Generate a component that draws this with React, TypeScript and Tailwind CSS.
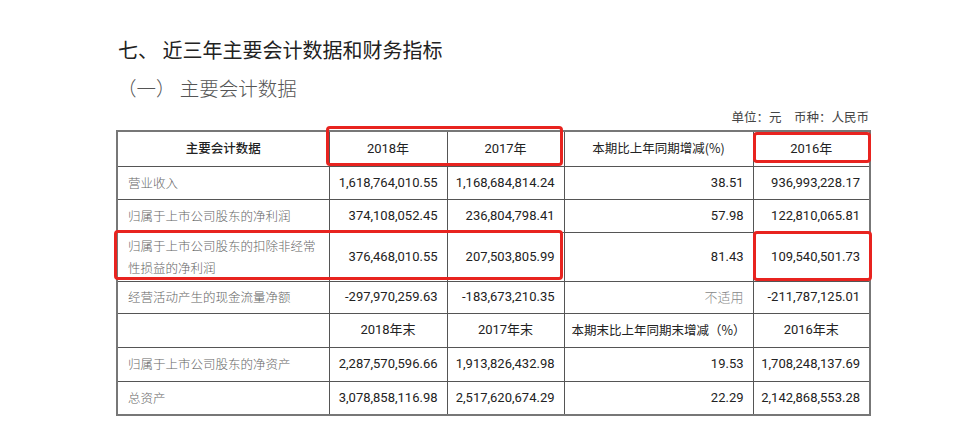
import React from "react";

const cjk = "font-['Noto_Sans_CJK_SC',sans-serif]";
const num = "font-['Roboto','Noto_Sans_CJK_SC',sans-serif]";

type Row = {
  label: string[];
  v: [string, string, string, string];
  h: string;
  gray4?: boolean;
};

const rows1: Row[] = [
  { label: ["营业收入"], v: ["1,618,764,010.55", "1,168,684,814.24", "38.51", "936,993,228.17"], h: "h-[33px]" },
  { label: ["归属于上市公司股东的净利润"], v: ["374,108,052.45", "236,804,798.41", "57.98", "122,810,065.81"], h: "h-[33px]" },
  {
    label: ["归属于上市公司股东的扣除非经常", "性损益的净利润"],
    v: ["376,468,010.55", "207,503,805.99", "81.43", "109,540,501.73"],
    h: "h-[49px]",
  },
  { label: ["经营活动产生的现金流量净额"], v: ["-297,970,259.63", "-183,673,210.35", "不适用", "-211,787,125.01"], h: "h-[32px]", gray4: true },
];

const rows2: Row[] = [
  { label: ["归属于上市公司股东的净资产"], v: ["2,287,570,596.66", "1,913,826,432.98", "19.53", "1,708,248,137.69"], h: "h-[34px]" },
  { label: ["总资产"], v: ["3,078,858,116.98", "2,517,620,674.29", "22.29", "2,142,868,553.28"], h: "h-[34px]" },
];

const td = "border border-[#555] p-0";

function DataRow({ r }: { r: Row }) {
  return (
    <tr className={r.h}>
      <td className={`${td} pl-[10px] ${cjk} text-[12.5px] leading-[22px] text-[#666] font-light align-middle`}>
        {r.label.map((l, i) => (
          <div key={i}>{l}</div>
        ))}
      </td>
      {r.v.map((x, i) => (
        <td
          key={i}
          className={`${td} pr-[9px] text-right text-[13px] ${
            i === 2 && r.gray4 ? `${cjk} text-[#888] font-light` : `${num} text-[#222]`
          }`}
        >
          {x}
        </td>
      ))}
    </tr>
  );
}

function Box({ cls }: { cls: string }) {
  return <div className={`absolute border-[3px] border-[#e8231f] rounded-[4px] pointer-events-none ${cls}`} />;
}

export default function App() {
  return (
    <div className="w-[960px] h-[446px] bg-white overflow-hidden relative">
      <div className="pt-[38px] pl-[118px]">
        <div className={`${cjk} text-[20px] leading-[24px] text-[#222]`}>七、 近三年主要会计数据和财务指标</div>
      </div>
      <div className="pt-[14px] pl-[117px]">
        <div className={`${cjk} text-[19.5px] leading-[24px] text-[#555] font-light`}>（一） 主要会计数据</div>
      </div>
      <div className="w-[869px] flex justify-end pt-[10px]">
        <div className={`font-['Liberation_Serif','Noto_Sans_CJK_SC',serif] text-[12.5px] leading-[16px] text-[#444]`}>
          单位：元&nbsp;&nbsp;&nbsp;&nbsp;币种：人民币
        </div>
      </div>
      <div className="pl-[116px] pt-[4px]">
        <div className="relative w-[753px]">
          <table className="border-collapse border-2 border-[#777] w-[753px] table-fixed">
            <colgroup>
              <col className="w-[212px]" />
              <col className="w-[118px]" />
              <col className="w-[117px]" />
              <col className="w-[189px]" />
              <col className="w-[117px]" />
            </colgroup>
            <tbody>
              <tr className="h-[35px]">
                <td className={`${td} text-center ${cjk} text-[12.5px] text-[#222] font-medium`}>主要会计数据</td>
                <td className={`${td} text-center ${num} text-[13px] text-[#222]`}>2018年</td>
                <td className={`${td} text-center ${num} text-[13px] text-[#222]`}>2017年</td>
                <td className={`${td} text-center ${cjk} text-[12.5px] text-[#222]`}>本期比上年同期增减(%)</td>
                <td className={`${td} text-center ${num} text-[13px] text-[#222]`}>2016年</td>
              </tr>
              {rows1.map((r, i) => (
                <DataRow key={i} r={r} />
              ))}
              <tr className="h-[34px]">
                <td className={td}></td>
                <td className={`${td} text-center ${num} text-[13px] text-[#222]`}>2018年末</td>
                <td className={`${td} text-center ${num} text-[13px] text-[#222]`}>2017年末</td>
                <td className={`${td} text-center ${cjk} text-[12.5px] text-[#222]`}>本期末比上年同期末增减（%）</td>
                <td className={`${td} text-center ${num} text-[13px] text-[#222]`}>2016年末</td>
              </tr>
              {rows2.map((r, i) => (
                <DataRow key={i} r={r} />
              ))}
            </tbody>
          </table>
          <Box cls="left-[210px] top-[-4px] w-[237px] h-[40px]" />
          <Box cls="left-[637px] top-[2px] w-[118px] h-[31px]" />
          <Box cls="left-[-2px] top-[100px] w-[449px] h-[50px]" />
          <Box cls="left-[637px] top-[101px] w-[119px] h-[50px]" />
        </div>
      </div>
    </div>
  );
}
